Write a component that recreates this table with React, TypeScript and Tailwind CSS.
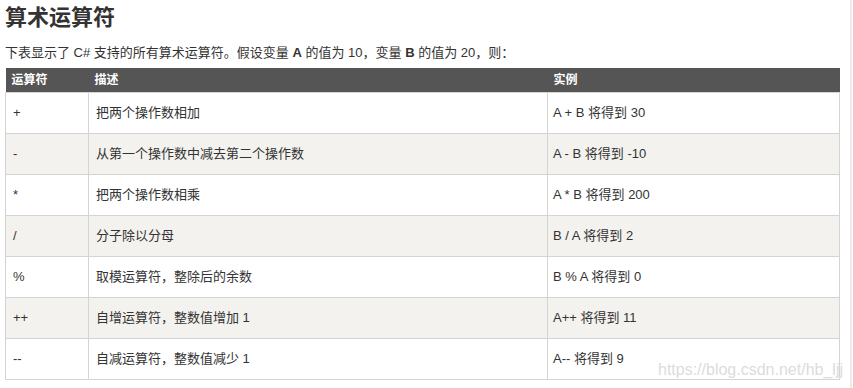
import React from 'react';

const rows = [
  { op: '+', desc: '把两个操作数相加', ex: 'A + B 将得到 30' },
  { op: '-', desc: '从第一个操作数中减去第二个操作数', ex: 'A - B 将得到 -10' },
  { op: '*', desc: '把两个操作数相乘', ex: 'A * B 将得到 200' },
  { op: '/', desc: '分子除以分母', ex: 'B / A 将得到 2' },
  { op: '%', desc: '取模运算符，整除后的余数', ex: 'B % A 将得到 0' },
  { op: '++', desc: '自增运算符，整数值增加 1', ex: 'A++ 将得到 11' },
  { op: '--', desc: '自减运算符，整数值减少 1', ex: 'A-- 将得到 9' },
];

const App: React.FC = () => {
  return (
    <div
      className="relative w-[853px] h-[388px] bg-white text-[#333] overflow-hidden"
      style={{ fontFamily: '"Liberation Sans", "Noto Sans CJK SC", sans-serif' }}
    >
      <div className="absolute top-0 right-[1px] w-[2px] h-full bg-[#ececec]" />
      <div className="pl-[5px] pt-[3px]">
        <h2 className="text-[22px] font-bold leading-[30px] text-[#333]">算术运算符</h2>
        <p className="mt-[10px] text-[13px] leading-[20px]">
          下表显示了 C# 支持的所有算术运算符。假设变量 <b>A</b> 的值为 10，变量 <b>B</b> 的值为 20，则：
        </p>

        <table className="mt-[5px] w-[834px] border-collapse text-[13px] table-fixed">
          <colgroup>
            <col className="w-[83px]" />
            <col className="w-[459px]" />
            <col className="w-[292px]" />
          </colgroup>
          <thead>
            <tr className="bg-[#555] text-white h-[24px]">
              <th className="text-left font-bold text-[12px] pl-[6px] leading-none">运算符</th>
              <th className="text-left font-bold text-[12px] pl-[6px] leading-none">描述</th>
              <th className="text-left font-bold text-[12px] pl-[6px] leading-none">实例</th>
            </tr>
          </thead>
          <tbody>
            {rows.map((r, i) => (
              <tr key={i} className={`h-[41px] ${i % 2 === 1 ? 'bg-[#f3f2ee]' : 'bg-white'}`}>
                <td className="border border-[#d4d4d4] pl-[7px]">{r.op}</td>
                <td className="border border-[#d4d4d4] pl-[7px]">{r.desc}</td>
                <td className="border border-[#d4d4d4] pl-[5px]">{r.ex}</td>
              </tr>
            ))}
          </tbody>
        </table>
      </div>
      <div className="absolute right-[10px] top-[360px] text-[16px] whitespace-nowrap text-[#dcdcdc] leading-[20px]">
        https://blog.csdn.net/hb_ljj
      </div>
    </div>
  );
};

export default App;
